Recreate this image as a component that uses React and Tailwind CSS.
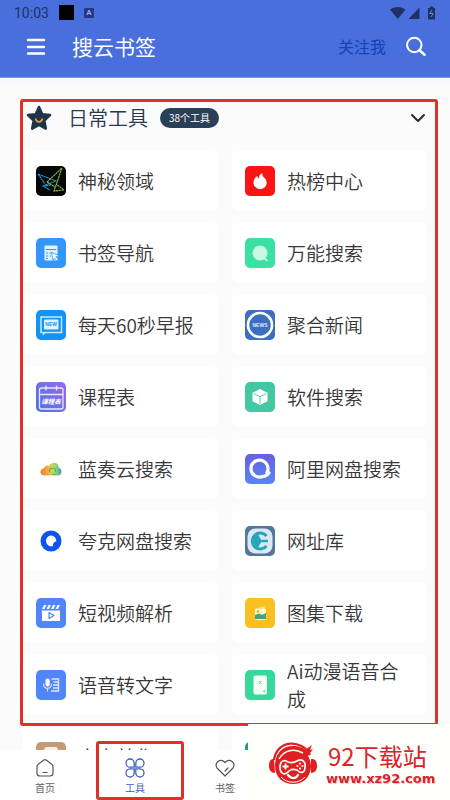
import React from "react";

function Tile({ fill, children }) {
  return (
    <svg className="size-[30px] shrink-0" viewBox="0 0 30 30" aria-hidden="true">
      {fill && <rect width="30" height="30" rx="5" fill={fill} />}
      {children}
    </svg>
  );
}

const icons = {
  mystery: (
    <Tile fill="#050708">
      <g fill="none" strokeWidth="1.1" strokeDasharray="2.500 .4">
        <path d="M2 8 20 15 7 20 14 24M2 8 9 18M7 20l8-1" stroke="#2b94cf" />
        <path d="M11 16 26 2 18 25 28 24 20 18M11 16l8 5" stroke="#8bbd3c" />
      </g>
    </Tile>
  ),
  bookmark: (
    <Tile fill="#3296fa">
      <rect x="8.500" y="7.500" width="13" height="15" rx="1" fill="#e2f0ff" />
      <path d="M10 11.500h10M10 15h2m1.500 0h3M10 18h2m1.500 0H15M10 20.500h2" stroke="#3296fa" strokeWidth="1" />
      <path d="m15.500 14.500 7.500 3-3.200 1.300 2.400 2.600-1.500 1.300-2.300-2.600-1.300 2.700z" fill="#fff" stroke="#3296fa" strokeWidth=".8" />
    </Tile>
  ),
  hot: (
    <Tile fill="#fc1414">
      <path d="M17.500 7c-3 1.400-3.700 3.500-3.500 5.600-1-.4-1.600-1.300-1.500-2.600C9.800 11.600 8.500 14 8.500 16.500c0 3.800 2.900 6.500 6.600 6.500s6.600-2.700 6.600-6.300c0-2.600-1.600-4.200-2.900-5.400-1.300-1.200-1.700-2.400-1.300-4.300z" fill="#fff" />
    </Tile>
  ),
  search: (
    <Tile fill="#3be0a3">
      <circle cx="15" cy="15" r="7.500" fill="#c9f8e5" />
      <path d="m19 20 3 2.500" stroke="#c9f8e5" strokeWidth="1.800" strokeLinecap="round" />
    </Tile>
  ),
  daily: (
    <Tile fill="#1194f5">
      <path d="M5 7h20.500v15.500H9L7.500 24v-1.500H5z" fill="none" stroke="#c8eaff" strokeWidth="1.500" />
      <rect x="8" y="9.500" width="14.500" height="10" rx="1" fill="#dff3ff" />
      <text x="15.200" y="16.300" textAnchor="middle" fontSize="5" fontWeight="700" fontFamily="Liberation Sans, sans-serif" fill="#1194f5">NEW</text>
    </Tile>
  ),
  course: (
    <Tile>
      <defs>
        <linearGradient id="courseFill" x1="1" y1="0" x2="0" y2="1">
          <stop stopColor="#9a6be8" />
          <stop offset="1" stopColor="#4a73e4" />
        </linearGradient>
      </defs>
      <rect width="30" height="30" rx="5" fill="url(#courseFill)" />
      <rect x="3.500" y="6" width="23.500" height="21" rx="2" fill="none" stroke="#e9e9ff" strokeWidth="1.300" />
      <path d="M3.500 12.500H27M10 3.500v5M20.500 3.500v5" stroke="#e9e9ff" strokeWidth="1.300" />
      <text x="15" y="22" textAnchor="middle" fontSize="6.500" fontWeight="700" fontStyle="italic" fontFamily="Noto Sans CJK SC, sans-serif" fill="#fff">课程表</text>
    </Tile>
  ),
  news: (
    <Tile fill="#3c6fc0">
      <circle cx="15" cy="15" r="12" fill="none" stroke="#fff" strokeWidth="2.600" />
      <text x="15" y="17" textAnchor="middle" fontSize="5" fontWeight="700" fontFamily="Liberation Sans, sans-serif" fill="#dce9ff">NEWS</text>
    </Tile>
  ),
  software: (
    <Tile fill="#43c8a3">
      <path d="m15 7 7.500 3.800v8.400L15 23l-7.500-3.800v-8.400z" fill="#fff" />
      <path d="m8.500 11.500 6.500 3.200 6.500-3.200M15 14.700V22" fill="none" stroke="#43c8a3" strokeWidth=".9" />
    </Tile>
  ),
  cloud: (
    <Tile>
      <defs>
        <linearGradient id="cloudFill">
          <stop stopColor="#ee7c38" />
          <stop offset=".35" stopColor="#f1ad43" />
          <stop offset=".6" stopColor="#cbd857" />
          <stop offset=".8" stopColor="#72ce83" />
          <stop offset="1" stopColor="#4788df" />
        </linearGradient>
      </defs>
      <path d="M8.500 21.500C3 21.500 3.500 14.500 8.200 14c.5-2.600 3.200-3.200 4.800-2C16 6.500 23 8.500 22.500 13.500c4.200 1 4 8-.7 8z" fill="url(#cloudFill)" />
      <path d="M13.500 18c-1-5 7-5 6 0M16 20.500h4.500" fill="none" stroke="#4eb85d" strokeWidth="1.100" />
    </Tile>
  ),
  quark: (
    <Tile>
      <circle cx="15" cy="15" r="10.500" fill="#0c54ed" />
      <path d="M15 9.500a5.500 5.500 0 0 1 5.300 6c-2 0-3.300 1.200-3.500 4.600A5.400 5.400 0 1 1 15 9.500z" fill="#fff" />
    </Tile>
  ),
  aliyun: (
    <Tile>
      <defs>
        <linearGradient id="aliFill" x1="0" y1="0" x2="0" y2="1">
          <stop stopColor="#6860dc" />
          <stop offset="1" stopColor="#5786fa" />
        </linearGradient>
      </defs>
      <rect width="30" height="30" rx="5" fill="url(#aliFill)" />
      <path d="M22 18.500A8.500 8.500 0 1 0 17.500 22.500c2.500 0 5-1.200 6.500-3.700" fill="none" stroke="#fff" strokeWidth="3.200" strokeLinecap="round" />
    </Tile>
  ),
  sites: (
    <Tile fill="#53769a">
      <rect x="2.500" y="2.500" width="25" height="25" rx="8" fill="#dce9f5" />
      <path d="M21.500 10A8 8 0 1 0 21.500 20" fill="none" stroke="#26a7b9" strokeWidth="3" />
      <path d="M13 8.500A7 7 0 0 0 13 21.500L17 15z" fill="#26a7b9" />
      <path d="M16.500 15H23" stroke="#26a7b9" strokeWidth="2.500" />
    </Tile>
  ),
  video: (
    <Tile fill="#5185fa">
      <path d="M6 12.500h18v10.500H6zM6 11l2-4h2.500l-2 4zm4.500 0 2-4H15l-2 4zm4.500 0 2-4h2.500l-2 4zm4.500 0 2-4H24l-2 4z" fill="#fff" />
      <path d="m13 14.500 5 3-5 3z" fill="none" stroke="#5185fa" strokeWidth="1.200" strokeLinejoin="round" />
    </Tile>
  ),
  gallery: (
    <Tile fill="#fbbf20">
      <path d="m9.500 11 10-3 2 11-8 4z" fill="#f7e58c" />
      <rect x="10" y="11" width="11" height="11" rx="1" fill="#fff7ce" />
      <path d="m10 17 4-1.500 3 1.500 4-2v6H10z" fill="#36a982" />
      <circle cx="13" cy="13.500" r="1.200" fill="#f2952d" />
    </Tile>
  ),
  speech: (
    <Tile fill="#5185fa">
      <rect x="9.500" y="8.500" width="4.200" height="8" rx="2.100" fill="#fff" />
      <path d="M7.500 13.500c0 6.500 8 6.500 8 0M11.500 18.500v3" fill="none" stroke="#dce7ff" strokeWidth="1.100" />
      <path d="M15.500 9h7v12H15M17.500 12h5M17 15h5M17 18h5" fill="none" stroke="#dce7ff" strokeWidth="1.300" />
    </Tile>
  ),
  anime: (
    <Tile fill="#35d99a">
      <rect x="8.500" y="5.500" width="13.500" height="19" rx="2" fill="#f4fff9" />
      <path d="m14 11 2.500 3m0-3L14 14M18 22l1.500-2v2" fill="none" stroke="#79dcb6" strokeWidth="1" />
    </Tile>
  ),
  beautify: (
    <Tile fill="#c39b78">
      <rect x="8" y="5" width="14" height="18" rx="3" fill="#f8eee5" />
    </Tile>
  ),
  identify: (
    <Tile fill="#239b70">
      <path d="M8 9h14v12H8z" fill="#fff" />
    </Tile>
  ),
};

const tools = [
  ["mystery", "神秘领域"],
  ["hot", "热榜中心"],
  ["bookmark", "书签导航"],
  ["search", "万能搜索"],
  ["daily", "每天60秒早报"],
  ["news", "聚合新闻"],
  ["course", "课程表"],
  ["software", "软件搜索"],
  ["cloud", "蓝奏云搜索"],
  ["aliyun", "阿里网盘搜索"],
  ["quark", "夸克网盘搜索"],
  ["sites", "网址库"],
  ["video", "短视频解析"],
  ["gallery", "图集下载"],
  ["speech", "语音转文字"],
  ["anime", "Ai动漫语音合成"],
];

const moreTools = [
  ["beautify", "文字美化"],
  ["identify", ""],
];

function ToolGrid({ items }) {
  return (
    <div className="grid grid-cols-2 gap-x-3.5 gap-y-3">
      {items.map(([icon, name]) => (
        <button key={icon} type="button" aria-label={name || "更多"} className="flex h-15 items-center gap-3 rounded-md bg-white pr-3 pl-[13px] text-left">
          {icons[icon]}
          <span className="text-[19px] leading-7 font-[350] text-[#383838]">{name}</span>
        </button>
      ))}
    </div>
  );
}

function StatusBar() {
  return (
    <div className="flex h-[25px] items-center px-3.5 text-[#1e3167]">
      <span className="font-['Roboto'] text-sm leading-5">10:03</span>
      <span className="ml-2.5 size-[15px] bg-black" />
      <span className="ml-2.5 flex size-[10px] items-center justify-center rounded-[1px] bg-[#213a80] font-['Roboto'] text-[8px] leading-none font-bold text-[#8fa7e6]">A</span>
      <svg className="ml-auto h-[14px] w-[46px]" viewBox="0 0 46 14" aria-hidden="true">
        <path d="M0 3.500C4.500 0 11 0 15.500 3.500L7.700 13zM29.500 1.500V13H18.500zM38 2h2V.5h3.500V2H45v11.500h-7z" fill="currentColor" />
        <path d="m42 4-2.200 3.500h3.400L41 11" fill="none" stroke="#6d87cf" strokeWidth="1" />
      </svg>
    </div>
  );
}

function Header() {
  return (
    <header className="shrink-0 border-b border-[#7d98e4] bg-[#486fdb]">
      <StatusBar />
      <div className="flex h-[52px] items-center pr-6 pb-2.5 pl-[26px]">
        <button type="button" aria-label="菜单">
          <svg className="size-5" viewBox="0 0 20 20" fill="none" stroke="#fff" strokeWidth="2.400" strokeLinecap="round">
            <path d="M2 4h16M2 11h16M2 17.500h16" />
          </svg>
        </button>
        <h1 className="ml-[26px] text-[21px] leading-7 font-normal text-white">搜云书签</h1>
        <button type="button" className="ml-auto text-base leading-6 text-[#1740b5]">关注我</button>
        <button type="button" aria-label="搜索" className="ml-5">
          <svg className="size-5" viewBox="0 0 20 20" fill="none" stroke="#fff" strokeWidth="2" strokeLinecap="round">
            <circle cx="8.300" cy="9" r="7.200" />
            <path d="m13.500 14.200 5 4.500" strokeWidth="2.500" />
          </svg>
        </button>
      </div>
    </header>
  );
}

function Watermark() {
  return (
    <div className="absolute right-0 bottom-0 flex h-[76px] w-[202px] items-center bg-[#fffffc] pt-1 pl-5">
      <svg className="h-11 w-[50px] shrink-0" viewBox="0 0 50 44" aria-hidden="true">
        <path d="M6 18C9-3 34-3 42 13" fill="none" stroke="#df2020" strokeWidth="2.200" />
        <path d="M6 17c-4 0-5 3-5 7s2 7 6 7zM43 17c5 0 6 3 6 7s-2 7-6 7z" fill="#df2020" />
        <path d="M25 4c6 0 10 2 12 4l7-5-2 5 3-1-5 7c2 4 3 7 3 11-1 11-8 17-18 17S7 35 7 24C7 12 14 4 25 4z" fill="#df2020" />
        <path d="M11 17C16 8 26 6 35 11" fill="none" stroke="#fffffc" strokeWidth="1.500" />
        <path d="M12 25c0-6 4-8 8-5 3 1 6 1 9-1 5-3 9 1 8 6 0 6-4 7-8 3-3-1-6-1-8 1-4 5-9 3-9-4z" fill="#df2020" stroke="#fffffc" strokeWidth="1.700" />
        <path d="M14.500 24.500h6m-3-3v6" stroke="#fffffc" strokeWidth="1.800" />
        <g fill="#fffffc">
          <circle cx="32" cy="21.500" r="1.100" />
          <circle cx="34.500" cy="24" r="1.100" />
          <circle cx="32" cy="26.500" r="1.100" />
          <circle cx="29.500" cy="24" r="1.100" />
        </g>
        <path d="M20 33c3 4 8 4 10 0" fill="none" stroke="#fffffc" strokeWidth="2.200" strokeLinecap="round" />
        <path d="M13 35c6 7 18 7 24 0" fill="none" stroke="#fffffc" strokeWidth="1" />
      </svg>
      <div className="ml-2 whitespace-nowrap text-[#d9242a]">
        <div className="pl-0.5 text-2xl leading-[30px]">92下载站</div>
        <div className="font-['DejaVu_Sans'] text-[13px] leading-4 font-bold drop-shadow-[1px_1px_0px_#f0c4c0]">www.xz92.com</div>
      </div>
    </div>
  );
}

function BottomNav() {
  return (
    <nav className="grid h-[50px] shrink-0 grid-cols-5 bg-white text-[10px] leading-4 text-[#666]">
      <a href="#home" className="flex flex-col items-center pt-2">
        <svg className="size-5" viewBox="0 0 20 20" fill="none" stroke="#555" strokeWidth="1.200" strokeLinecap="round" strokeLinejoin="round">
          <path d="M2 8.500Q2 7 3.300 6.200L8.500 2.200q1.500-1 3 0l5.200 4Q18 7 18 8.500V15q0 3-3 3H5q-3 0-3-3zM8 14.500h4" />
        </svg>
        <span className="mt-0.5">首页</span>
      </a>
      <a href="#tools" aria-current="page" className="relative flex flex-col items-center pt-2 text-[#3e61c2]">
        <svg className="size-5" viewBox="0 0 20 20" fill="none" stroke="currentColor" strokeWidth="1.300">
          <path d="M9.200 9.200H5A4.100 4.100 0 1 1 9.200 5zM10.800 9.200V5A4.100 4.100 0 1 1 15 9.200zM9.200 10.800V15A4.100 4.100 0 1 1 5 10.800zM10.800 10.800H15a4.100 4.100 0 1 1-4.200 4.200z" />
        </svg>
        <span className="mt-0.5">工具</span>
        <span className="absolute -top-[9px] right-[-4px] bottom-0 left-1.5 rounded-[3px] border-[3px] border-[#df302b]" />
      </a>
      <a href="#bookmarks" className="flex flex-col items-center pt-2">
        <svg className="size-5" viewBox="0 0 20 20" fill="none" stroke="#555" strokeWidth="1.200" strokeLinecap="round" strokeLinejoin="round">
          <path d="M10 18 2 10C-1 5 5-.5 10 4.500 15-.5 21 5 18 10zM10 13l3-3" />
        </svg>
        <span className="mt-0.5">书签</span>
      </a>
    </nav>
  );
}

export default function App() {
  return (
    <div className="relative flex h-screen flex-col overflow-hidden bg-[#fbfbfb] font-['Noto_Sans_CJK_SC',sans-serif]">
      <Header />
      <main className="min-h-0 flex-1 overflow-y-auto border-t-[5px] border-[#f6f8fd] [scrollbar-width:none]">
        <section className="mt-4 mr-3 ml-5 rounded-[3px] border-[3px] border-[#df302b] pr-2 pb-2">
          <div className="mb-[17px] flex h-8 items-center pl-[3px]">
            <svg className="size-[26px]" viewBox="0 0 26 26" aria-hidden="true">
              <path d="m13 2 3.300 7.200 7.700.9-5.700 5.500 1.500 8L13 19.800 6.200 23.600l1.500-8L2 10.100l7.700-.9z" fill="#1f3449" stroke="#1f3449" strokeWidth="2.500" strokeLinejoin="round" />
              <path d="M9.500 13.500c1 4.500 6 4.500 7 0" fill="none" stroke="#e8a044" strokeWidth="1.500" />
            </svg>
            <h2 className="ml-4 text-[20px] leading-7 font-[350] text-[#26394e]">日常工具</h2>
            <span className="ml-3 rounded-full bg-[#2a4058] px-[9px] text-[10px] leading-5 text-white">38个工具</span>
            <button type="button" aria-label="收起" className="ml-auto">
              <svg className="h-4 w-[18px]" viewBox="0 0 18 16" fill="none" stroke="#202b38" strokeWidth="2" strokeLinecap="round" strokeLinejoin="round">
                <path d="m3 5 6 6 6-6" />
              </svg>
            </button>
          </div>
          <ToolGrid items={tools} />
        </section>
        <div className="mt-px mr-[23px] ml-[23px]">
          <ToolGrid items={moreTools} />
        </div>
      </main>
      <BottomNav />
      <Watermark />
    </div>
  );
}
